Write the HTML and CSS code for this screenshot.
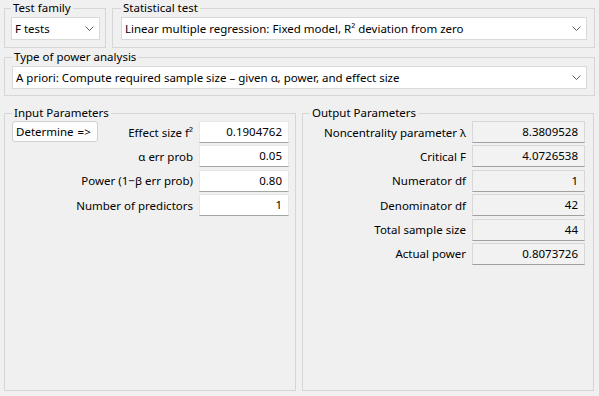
FILE: index.html
```html
<!DOCTYPE html>
<html lang="en">
<head>
  <meta charset="UTF-8" />
  <title>G*Power</title>
  <link rel="stylesheet" href="styles.css">
</head>
<body>

<div class="window">
  <div class="top-row">
    <fieldset class="group family">
      <legend>Test family</legend>
      <div class="select">
        <span>F tests</span>
        <svg class="chevron" width="9" height="5" viewBox="0 0 9 5"><polyline points="0.5,0.5 4.5,4.5 8.5,0.5" /></svg>
      </div>
    </fieldset>
    <fieldset class="group stat-test">
      <legend>Statistical test</legend>
      <div class="select">
        <span>Linear multiple regression: Fixed model, R² deviation from zero</span>
        <svg class="chevron" width="9" height="5" viewBox="0 0 9 5"><polyline points="0.5,0.5 4.5,4.5 8.5,0.5" /></svg>
      </div>
    </fieldset>
  </div>

  <fieldset class="group analysis">
    <legend>Type of power analysis</legend>
    <div class="select">
      <span>A priori: Compute required sample size – given α, power, and effect size</span>
      <svg class="chevron" width="9" height="5" viewBox="0 0 9 5"><polyline points="0.5,0.5 4.5,4.5 8.5,0.5" /></svg>
    </div>
  </fieldset>

  <div class="params">
    <fieldset class="group input-params">
      <legend>Input Parameters</legend>
      <div class="param-grid">
        <button class="determine">Determine =&gt;</button>
        <label class="param-label">Effect size f²</label>
        <div class="field">0.1904762</div>

        <label class="param-label wide">α err prob</label>
        <div class="field">0.05</div>

        <label class="param-label wide">Power (1−β err prob)</label>
        <div class="field">0.80</div>

        <label class="param-label wide">Number of predictors</label>
        <div class="field">1</div>
      </div>
    </fieldset>

    <fieldset class="group output-params">
      <legend>Output Parameters</legend>
      <div class="result-grid">
        <label class="param-label">Noncentrality parameter λ</label>
        <div class="field readonly">8.3809528</div>

        <label class="param-label">Critical F</label>
        <div class="field readonly">4.0726538</div>

        <label class="param-label">Numerator df</label>
        <div class="field readonly">1</div>

        <label class="param-label">Denominator df</label>
        <div class="field readonly">42</div>

        <label class="param-label">Total sample size</label>
        <div class="field readonly">44</div>

        <label class="param-label">Actual power</label>
        <div class="field readonly">0.8073726</div>
      </div>
    </fieldset>
  </div>
</div>

</body>
</html>
```

FILE: styles.css
```css
body {
  margin: 0;
  background: #f0f0f0;
  font-family: 'Noto Sans', 'DejaVu Sans', sans-serif;
  font-size: 11.5px;
  color: #000;
}

.window {
  height: 396px;
  box-sizing: border-box;
  padding: 0 4px 5px 4px;
  display: flex;
  flex-direction: column;
}

/* Group boxes */
.group {
  margin: 0;
  min-width: 0;
  border: 1px solid #d6d6d6;
  box-sizing: border-box;
}

.group legend {
  padding: 0 2px;
  line-height: 16px;
}

.top-row {
  display: flex;
  gap: 6px;
}

.family {
  width: 102px;
  padding: 1px 5px 7px 6px;
}

.stat-test {
  flex: 1;
  padding: 1px 7px 7px 8px;
}

.analysis {
  margin-top: 1px;
  padding: 1px 7px 6px 7px;
}

/* Combo boxes */
.select {
  height: 23px;
  box-sizing: border-box;
  background: #fff;
  border: 1px solid #d9d9d9;
  display: flex;
  align-items: center;
  justify-content: space-between;
  padding: 0 5px 0 3px;
  white-space: nowrap;
}

.chevron {
  flex-shrink: 0;
  fill: none;
  stroke: #606060;
  stroke-width: 1;
}

/* Parameter panels */
.params {
  flex: 1;
  margin-top: 9px;
  display: grid;
  grid-template-columns: 292px 292px;
  column-gap: 6px;
}

.input-params {
  padding: 0 6px 0 7px;
}

.output-params {
  padding: 0 8px 0 7px;
}

.param-grid,
.result-grid {
  display: grid;
  grid-auto-rows: 22px;
  row-gap: 2.4px;
  column-gap: 6px;
  align-items: center;
}

.param-grid {
  grid-template-columns: 86px minmax(0, 1fr) 90px;
}

.result-grid {
  grid-template-columns: minmax(0, 1fr) 113px;
}

.param-label {
  text-align: right;
  white-space: nowrap;
}

.param-label.wide {
  grid-column: 1 / 3;
}

.determine {
  align-self: start;
  height: 21px;
  margin: 0;
  padding: 0 0 0 3px;
  text-align: left;
  font: inherit;
  color: #000;
  background: #fdfdfd;
  border: 1px solid #d0d0d0;
  border-radius: 3px;
  word-spacing: 1px;
}

.field {
  height: 22px;
  box-sizing: border-box;
  background: #fff;
  border: 1px solid #e6e6e6;
  border-bottom-color: #a4a4a4;
  text-align: right;
  padding-right: 6px;
  line-height: 20px;
}

.field.readonly {
  background: #f2f2f2;
  border-color: #d8d8d8;
  border-bottom-color: #a0a0a0;
}
```
